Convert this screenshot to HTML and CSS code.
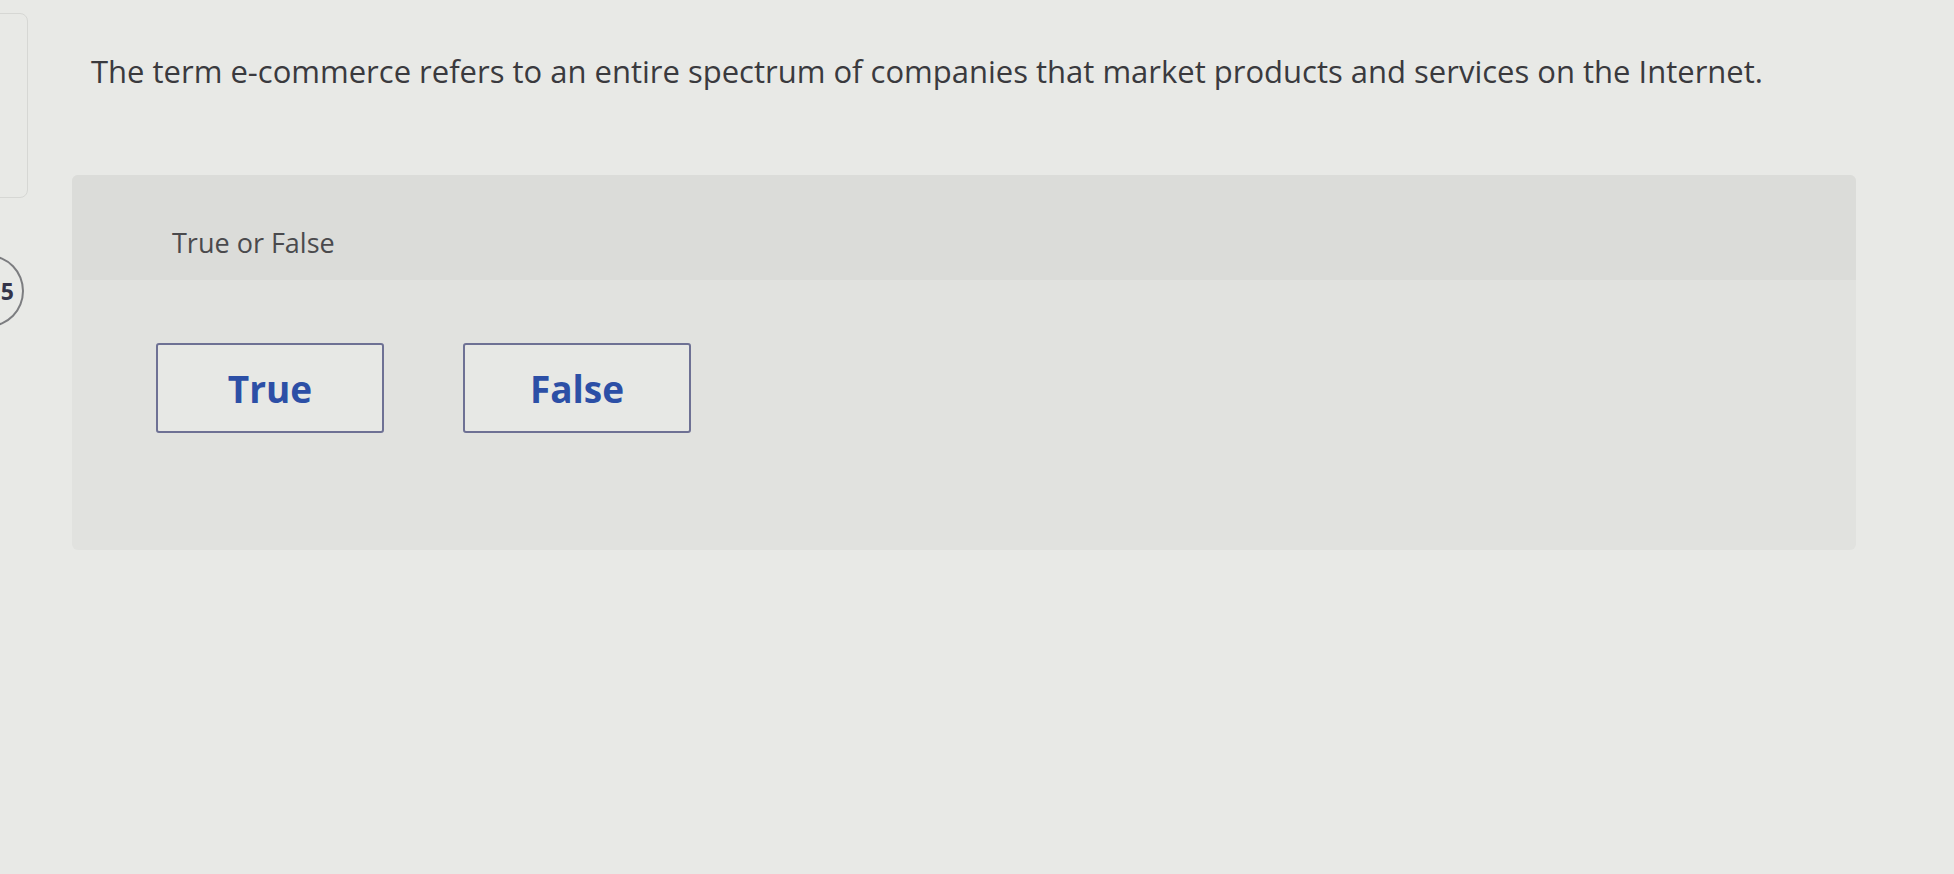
FILE: index.html
```html
<!DOCTYPE html>
<html lang="en">
<head>
<meta charset="utf-8">
<title>True or False</title>
<link rel="stylesheet" href="styles.css">
</head>
<body>
  <div class="page">
    <aside class="rail">
      <div class="rail-card"></div>
      <div class="rail-num">5</div>
    </aside>
    <main class="main">
      <p class="question">The term e-commerce refers to an entire spectrum of companies that market products and services on the Internet.</p>
      <section class="panel">
        <div class="panel-head">True or False</div>
        <div class="panel-body">
          <button class="choice" type="button">True</button>
          <button class="choice" type="button">False</button>
        </div>
      </section>
    </main>
  </div>
</body>
</html>
```
FILE: styles.css
```css
html, body {
  margin: 0;
  padding: 0;
  height: 100%;
}
body {
  background: #e8e9e6;
  font-family: "Open Sans", Lato, Arial, sans-serif;
  color: #3b3b3d;
  overflow: hidden;
}
.page {
  display: flex;
  align-items: flex-start;
}
.rail {
  width: 30px;
  flex: none;
  display: flex;
  flex-direction: column;
}
.rail-card {
  margin-left: -12px;
  margin-top: 13px;
  width: 40px;
  height: 185px;
  border: 1px solid #d6d7d4;
  border-radius: 8px;
  box-sizing: border-box;
}
.rail-num {
  margin-left: -46px;
  margin-top: 57px;
  width: 70px;
  height: 72px;
  box-sizing: border-box;
  border: 2px solid #7c7d80;
  border-radius: 50%;
  display: flex;
  align-items: center;
  justify-content: flex-end;
  padding-right: 8px;
  font-weight: 700;
  font-size: 23px;
  color: #34344a;
}
.main {
  margin-left: 42px;
  width: 1784px;
  flex: none;
}
.question {
  margin: 51px 0 0 19px;
  font-size: 31px;
  line-height: 40px;
  color: #3a3a3e;
}
.panel {
  margin-top: 84px;
  background: #e1e2df;
  border-radius: 6px;
  overflow: hidden;
}
.panel-head {
  background: #dbdcd9;
  height: 105px;
  box-sizing: border-box;
  padding: 51px 0 0 100px;
  font-size: 27px;
  line-height: 34px;
  color: #4a4a4d;
}
.panel-body {
  height: 270px;
  box-sizing: border-box;
  padding: 63px 0 0 84px;
  display: flex;
  align-items: flex-start;
  gap: 79px;
}
.choice {
  width: 228px;
  height: 90px;
  background: #e7e8e5;
  border: 2px solid #6e7194;
  border-radius: 3px;
  font-family: "Open Sans", Lato, Arial, sans-serif;
  font-weight: 700;
  font-size: 37px;
  color: #2c4fa6;
  padding: 0;
  cursor: pointer;
}
```
